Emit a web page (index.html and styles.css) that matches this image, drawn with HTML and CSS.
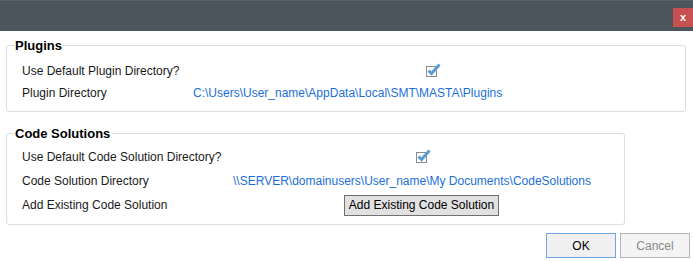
FILE: index.html
```html
<!DOCTYPE html>
<html lang="en">
<head>
    <meta charset="UTF-8">
    <title>Settings</title>
    <link rel="stylesheet" href="styles.css">
</head>
<body>
    <div class="titlebar">
        <div class="close">x</div>
    </div>

    <fieldset class="group plugins">
        <legend>Plugins</legend>
        <div class="grid">
            <div class="label">Use Default Plugin Directory?</div>
            <div class="value center">
                <svg class="check" width="16" height="14" viewBox="0 0 16 14">
                    <rect x="0.5" y="3.5" width="10" height="10" fill="#fff" stroke="#8c8c8c"/>
                    <path d="M2.5 7.5 L5.5 10.5 L13.5 1.5" fill="none" stroke="#5b9bd5" stroke-width="3"/>
                </svg>
            </div>
            <div class="label">Plugin Directory</div>
            <div class="value link">C:\Users\User_name\AppData\Local\SMT\MASTA\Plugins</div>
        </div>
    </fieldset>

    <fieldset class="group code">
        <legend>Code Solutions</legend>
        <div class="grid">
            <div class="label">Use Default Code Solution Directory?</div>
            <div class="value center">
                <svg class="check" width="16" height="14" viewBox="0 0 16 14">
                    <rect x="0.5" y="3.5" width="10" height="10" fill="#fff" stroke="#8c8c8c"/>
                    <path d="M2.5 7.5 L5.5 10.5 L13.5 1.5" fill="none" stroke="#5b9bd5" stroke-width="3"/>
                </svg>
            </div>
            <div class="label">Code Solution Directory</div>
            <div class="value link">\\SERVER\domainusers\User_name\My Documents\CodeSolutions</div>
            <div class="label">Add Existing Code Solution</div>
            <div class="value center"><button class="add">Add Existing Code Solution</button></div>
        </div>
    </fieldset>

    <div class="footer">
        <button class="btn ok">OK</button>
        <button class="btn cancel">Cancel</button>
    </div>
</body>
</html>
```

FILE: styles.css
```css
*{
    box-sizing: border-box;
}
body{
    margin: 0;
    background-color: #ffffff;
    font-family: "Liberation Sans", Arial, sans-serif;
    font-size: 12px;
    color: #1a1a1a;
}
.titlebar{
    height: 31px;
    background-color: #4d555c;
    border-top: 1px solid #5a6168;
    display: flex;
    justify-content: flex-end;
    align-items: flex-start;
}
.close{
    margin-top: 7px;
    width: 20px;
    height: 19px;
    background-color: #c75050;
    color: white;
    font-weight: bold;
    font-size: 11px;
    line-height: 18px;
    text-align: center;
}
.group{
    margin: 0 0 0 6px;
    padding: 0 14px 7px 14px;
    border: 1px solid #d8dee6;
    border-radius: 3px;
}
.group legend{
    margin-left: -7px;
    padding: 0 1px;
    font-size: 13px;
    font-weight: bold;
    line-height: 15px;
    color: #000;
}
.plugins{
    width: 680px;
    margin-top: 7px;
}
.code{
    width: 619px;
    margin-top: 14px;
    padding-top: 4px;
}
.grid{
    display: grid;
    grid-template-columns: 172px 1fr;
    grid-auto-rows: 22px;
    align-items: center;
}
.plugins .grid{
    padding-top: 7px;
}
.code .grid{
    grid-template-columns: 212px 1fr;
    grid-auto-rows: 24px;
}
.label{
    padding-left: 1px;
}
.center{
    display: flex;
    justify-content: center;
}
.check{
    margin-left: 4px;
    margin-top: -3px;
}
.link{
    color: #1c6fd6;
}
.add{
    font-family: "Liberation Sans", Arial, sans-serif;
    font-size: 12px;
    color: #000;
    background-color: #e1e1e1;
    border: 1px solid #707070;
    border-radius: 0;
    width: 155px;
    height: 21px;
    padding: 0;
}
.footer{
    display: flex;
    justify-content: flex-end;
    gap: 4px;
    padding-right: 3px;
    margin-top: 8px;
}
.btn{
    width: 70px;
    height: 25px;
    font-family: "Liberation Sans", Arial, sans-serif;
    font-size: 12px;
    border-radius: 0;
    padding: 0;
}
.ok{
    background-color: #f0f0f0;
    border: 1px solid #6ea7e6;
    color: #000;
}
.cancel{
    background-color: #f4f4f4;
    border: 1px solid #b4b4b4;
    color: #8a8a8a;
}
```
